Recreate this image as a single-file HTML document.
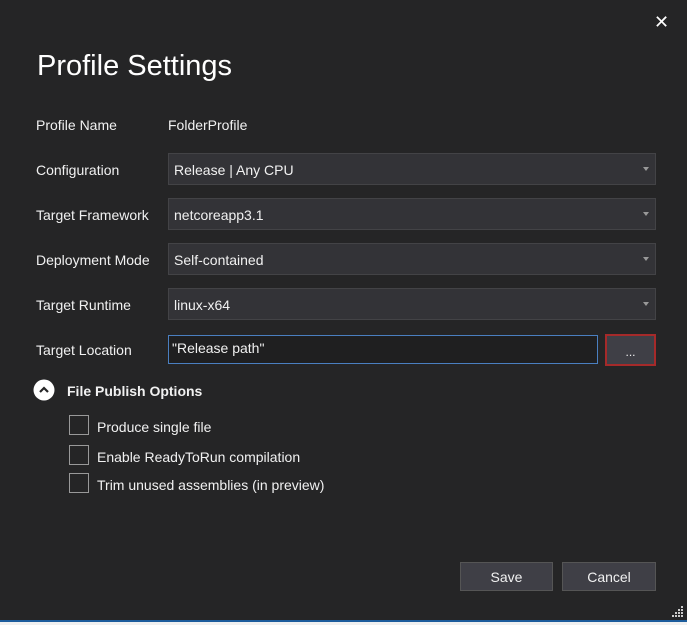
<!DOCTYPE html>
<html><head><style>
*{margin:0;padding:0;box-sizing:border-box}
body{width:687px;height:625px;background:#252526;font-family:"Liberation Sans",sans-serif;color:#f1f1f1;position:relative;overflow:hidden;font-size:14px}
.a{position:absolute}
.lbl{left:36px;font-size:14px;color:#f1f1f1}
.dd{left:168px;width:488px;height:32px;background:#333337;border:1px solid #434346;padding:8px 5px;font-size:14px}
.dd:after{content:"";position:absolute;right:6px;top:13px;border-left:3.5px solid transparent;border-right:3.5px solid transparent;border-top:4px solid #999}
.cb{left:69px;width:20px;height:20px;border:1px solid #999}
.ct{left:97px;font-size:14px}
.btn{top:562px;height:29px;background:#3f3f46;border:1px solid #555;text-align:center;line-height:29px;font-size:14px}
</style></head><body>
<div class="a" style="left:654px;top:12px;font-size:18px;color:#fff">✕</div>
<div class="a" style="left:37px;top:50px;font-size:29px;color:#fff">Profile Settings</div>
<div class="a lbl" style="top:117px">Profile Name</div>
<div class="a" style="left:168px;top:117px">FolderProfile</div>
<div class="a lbl" style="top:162px">Configuration</div>
<div class="a dd" style="top:153px">Release | Any CPU</div>
<div class="a lbl" style="top:207px">Target Framework</div>
<div class="a dd" style="top:198px">netcoreapp3.1</div>
<div class="a lbl" style="top:252px">Deployment Mode</div>
<div class="a dd" style="top:243px">Self-contained</div>
<div class="a lbl" style="top:297px">Target Runtime</div>
<div class="a dd" style="top:288px">linux-x64</div>
<div class="a lbl" style="top:342px">Target Location</div>
<div class="a" style="left:168px;top:335px;width:430px;height:29px;background:#1f1f20;border:1px solid #4a7fc0;padding:4px 3px">"Release path"</div>
<div class="a" style="left:605px;top:334px;width:51px;height:32px;background:#3f3f46;border:2px solid #a52a2a;text-align:center;font-size:12px;line-height:32px">...</div>
<svg class="a" style="left:33px;top:379px" width="22" height="22"><circle cx="11" cy="11" r="10.5" fill="#fff"/><path d="M7 13 L11 9 L15 13" stroke="#252526" stroke-width="2.2" fill="none"/></svg>
<div class="a" style="left:67px;top:383px;font-weight:bold;font-size:14px">File Publish Options</div>
<div class="a cb" style="top:415px"></div><div class="a ct" style="top:419px">Produce single file</div>
<div class="a cb" style="top:445px"></div><div class="a ct" style="top:449px">Enable ReadyToRun compilation</div>
<div class="a cb" style="top:473px"></div><div class="a ct" style="top:477px">Trim unused assemblies (in preview)</div>
<div class="a btn" style="left:460px;width:93px">Save</div>
<div class="a btn" style="left:562px;width:94px">Cancel</div>
<svg class="a" style="left:672px;top:606px" width="12" height="12" fill="#ccc"><rect x="9" y="0" width="2" height="2"/><rect x="6" y="3" width="2" height="2"/><rect x="9" y="3" width="2" height="2"/><rect x="3" y="6" width="2" height="2"/><rect x="6" y="6" width="2" height="2"/><rect x="9" y="6" width="2" height="2"/><rect x="0" y="9" width="2" height="2"/><rect x="3" y="9" width="2" height="2"/><rect x="6" y="9" width="2" height="2"/><rect x="9" y="9" width="2" height="2"/></svg>
<div class="a" style="left:0;top:620px;width:687px;height:2px;background:#1c5c9c"></div>
<div class="a" style="left:0;top:622px;width:687px;height:3px;background:#f0f0f0"></div>
</body></html>
